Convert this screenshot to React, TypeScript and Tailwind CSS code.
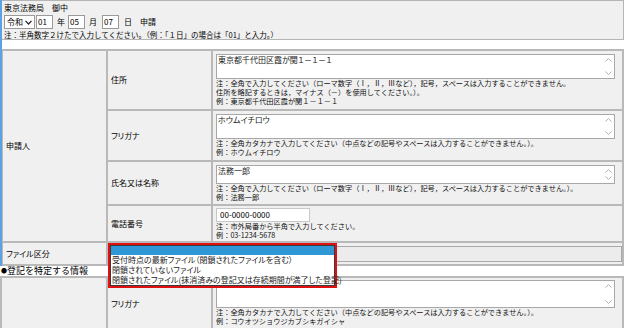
import React from "react";

const JP = "font-['Noto_Sans_CJK_JP','Noto_Sans',sans-serif]";
const PALT = "[font-feature-settings:'palt']";

const ScrollArrows = () => (
  <div className="flex flex-col justify-between items-center w-[10px] py-[3px] pr-[2px]">
    <svg width="7" height="4" viewBox="0 0 7 4">
      <polyline points="0.5,3.5 3.5,0.5 6.5,3.5" fill="none" stroke="#b0b0b0" strokeWidth="1" />
    </svg>
    <svg width="7" height="4" viewBox="0 0 7 4">
      <polyline points="0.5,0.5 3.5,3.5 6.5,0.5" fill="none" stroke="#b0b0b0" strokeWidth="1" />
    </svg>
  </div>
);

const TextBox = ({value, h}: {value: string; h: string}) => (
  <div className={`flex bg-white border border-[#a8a8a8] ${h}`}>
    <div className={`flex-1 px-[1px] text-[8px] leading-[10px] text-[#222] ${PALT}`}>{value}</div>
    <ScrollArrows />
  </div>
);

const Notes = ({lines}: {lines: string[]}) => (
  <div className="text-[7.2px] leading-[9px] text-[#111]">
    {lines.map((l) => (
      <div key={l} className="whitespace-nowrap">{l}</div>
    ))}
  </div>
);

const DateInput = ({value}: {value: string}) => (
  <div className="w-[17px] h-[14px] bg-white border border-[#9a9a9a] flex items-center px-[1px] text-[8px]">
    {value}
  </div>
);

const cell = "border border-[#b9b9b9] bg-[#f0f0f0] align-middle";
const labelCell = `${cell} pl-[3px] text-[8px] ${PALT}`;
const inputCell = `${cell} pl-[3px] pr-[7px]`;

const FILE_OPTIONS = [
  "受付時点の最新ファイル（閉鎖されたファイルを含む）",
  "閉鎖されていないファイル",
  "閉鎖されたファイル(抹消済みの登記又は存続期間が満了した登記)",
];

export default function App() {
  return (
    <div className={`w-[626px] h-[328px] overflow-hidden bg-white text-black ${JP}`}>
      <div className="w-[624px] border-l-2 border-l-[#5aa2e2]">
        {/* header box */}
        <div className="h-[40px] bg-[#f0f0f0] border border-[#b5b5b5] border-l-0 pl-[2px] pt-[2px]">
          <div className="text-[8px] leading-[10px]">東京法務局　御中</div>
          <div className="flex items-center h-[14px] mt-[2px] text-[8px]">
            <div className="w-[31px] h-[14px] bg-white border border-[#9a9a9a] flex items-center justify-between pl-[2px] pr-[2px]">
              <span>令和</span>
              <svg width="7" height="5" viewBox="0 0 7 5">
                <polyline points="0.5,0.8 3.5,4 6.5,0.8" fill="none" stroke="#222" strokeWidth="1.2" />
              </svg>
            </div>
            <div className="ml-[1px]">
              <DateInput value="01" />
            </div>
            <span className="ml-[4px] mr-[3px]">年</span>
            <DateInput value="05" />
            <span className="ml-[4px] mr-[5px]">月</span>
            <DateInput value="07" />
            <span className="ml-[5px]">日</span>
            <span className="ml-[8px]">申請</span>
          </div>
          <div className="text-[7.5px] leading-[10px] mt-[1px] whitespace-nowrap">
            注：半角数字２けたで入力してください。（例：「１日」の場合は「01」と入力。）
          </div>
        </div>

        {/* applicant table */}
        <table className="mt-[9px] w-[622px] table-fixed border-separate border-spacing-0 border border-[#b9b9b9] border-l-0">
          <colgroup>
            <col className="w-[105px]" />
            <col className="w-[105px]" />
            <col />
          </colgroup>
          <tbody>
            <tr>
              <td rowSpan={4} className={labelCell}>申請人</td>
              <td className={labelCell}>住所</td>
              <td className={`${inputCell} pt-[3px] pb-[3px]`}>
                <TextBox value="東京都千代田区霞が関１－１－１" h="h-[25px]" />
                <Notes
                  lines={[
                    "注：全角で入力してください（ローマ数字（Ⅰ，Ⅱ，Ⅲなど），記号，スペースは入力することができません。",
                    "住所を略記するときは，マイナス（－）を使用してください。）。",
                    "例：東京都千代田区霞が関１－１－１",
                  ]}
                />
              </td>
            </tr>
            <tr>
              <td className={labelCell}>フリガナ</td>
              <td className={`${inputCell} pt-[3px] pb-[3px]`}>
                <TextBox value="ホウムイチロウ" h="h-[25px]" />
                <Notes
                  lines={[
                    "注：全角カタカナで入力してください（中点などの記号やスペースは入力することができません。）。",
                    "例：ホウムイチロウ",
                  ]}
                />
              </td>
            </tr>
            <tr>
              <td className={labelCell}>氏名又は名称</td>
              <td className={`${inputCell} pt-[3px] pb-[2px]`}>
                <TextBox value="法務一郎" h="h-[19px]" />
                <Notes
                  lines={[
                    "注：全角で入力してください（ローマ数字（Ⅰ，Ⅱ，Ⅲなど），記号，スペースは入力することができません。）。",
                    "例：法務一郎",
                  ]}
                />
              </td>
            </tr>
            <tr>
              <td className={labelCell}>電話番号</td>
              <td className={`${inputCell} pt-[2px] pb-[1px]`}>
                <div className="w-[94px] h-[14px] bg-white border border-[#c8c8c8] flex items-center px-[3px] text-[8px]">
                  00-0000-0000
                </div>
                <Notes lines={["注：市外局番から半角で入力してください。", "例：03-1234-5678"]} />
              </td>
            </tr>
            <tr>
              <td className={labelCell}>ファイル区分</td>
              <td colSpan={2} className={`${cell} relative pl-[3px] pt-[3px] pb-[2px]`}>
                <div className="h-[16px] bg-[#ececec] border border-[#a8a8a8]" />
                <div className="absolute left-0 top-0 w-[229px] h-[45px] border-2 border-[#e01010] bg-white z-10">
                  <div className={`h-full border border-[#3a3a3a] text-[8px] leading-[10px] text-[#222] ${PALT}`}>
                    <div className="h-[9px] bg-[#2e97d6]" />
                    {FILE_OPTIONS.map((o) => (
                      <div key={o} className="pl-[1px] whitespace-nowrap">{o}</div>
                    ))}
                  </div>
                </div>
              </td>
            </tr>
          </tbody>
        </table>
      </div>

      {/* section heading */}
      <div className="h-[10px] flex items-center pl-[1px] whitespace-nowrap leading-[10px]">
        <span className="text-[6px]">●</span>
        <span className="text-[9px]">登記を特定する情報</span>
      </div>

      <table className="w-[624px] table-fixed border-separate border-spacing-0 border border-[#b9b9b9]">
        <colgroup>
          <col className="w-[106px]" />
          <col className="w-[105px]" />
          <col />
        </colgroup>
        <tbody>
          <tr>
            <td className={labelCell}></td>
            <td className={labelCell}>フリガナ</td>
            <td className={`${inputCell} pt-[2px] pb-[3px]`}>
              <TextBox value="" h="h-[28px]" />
              <Notes
                lines={[
                  "注：全角カタカナで入力してください（中点などの記号やスペースは入力することができません。）。",
                  "例：コウオツショウジカブシキガイシャ",
                ]}
              />
            </td>
          </tr>
        </tbody>
      </table>
    </div>
  );
}
